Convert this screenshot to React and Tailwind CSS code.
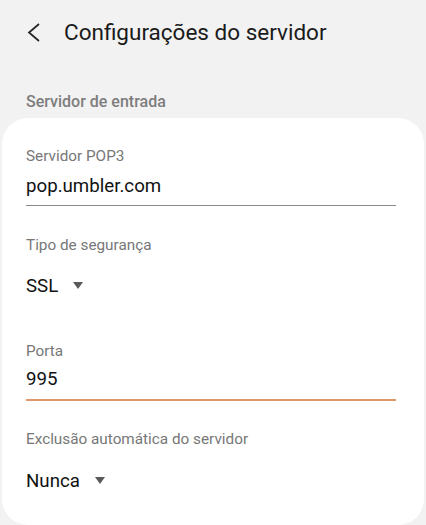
export default function App() {
  const font = { fontFamily: "Roboto, 'Noto Sans', sans-serif" };
  const Tri = () => (
    <svg width="10" height="7" viewBox="0 0 10 7" className="ml-[15px] self-start mt-[8px]">
      <polygon points="0,0 10,0 5,7" fill="#5a5a5a" />
    </svg>
  );
  return (
    <div className="w-[426px] h-[525px] overflow-hidden bg-[#f2f2f2] flex flex-col" style={font}>
      <div className="h-[64px] flex items-center pl-[27px] shrink-0">
        <svg width="14" height="19" viewBox="0 0 14 19" className="shrink-0">
          <polyline points="12,1 2,9.5 12,18" fill="none" stroke="#222" strokeWidth="1.7" />
        </svg>
        <span className="ml-[23px] text-[22.5px] text-[#1a1a1a] leading-none">Configurações do servidor</span>
      </div>
      <div className="h-[54px] shrink-0 pl-[26px] pt-[28px]">
        <div className="text-[16px] font-medium text-[#7d7d7d] leading-[20px]">Servidor de entrada</div>
      </div>
      <div className="mx-[2px] bg-white rounded-[26px] flex-1 px-[24px] pt-[29px]">
        <div className="text-[15.3px] text-[#777] leading-[18px]">Servidor POP3</div>
        <div className="text-[18.7px] text-[#111] leading-[24px] mt-[9px]">pop.umbler.com</div>
        <div className="h-px bg-[#8a8a8a] mt-[7px] mr-[4px]"></div>
        <div className="text-[15.3px] text-[#777] leading-[18px] mt-[30px]">Tipo de segurança</div>
        <div className="flex mt-[20px] h-[24px]">
          <span className="text-[18.7px] text-[#111] leading-[24px]">SSL</span>
          <Tri />
        </div>
        <div className="text-[15.3px] text-[#777] leading-[18px] mt-[44px]">Porta</div>
        <div className="text-[18.7px] text-[#111] leading-[24px] mt-[7px]">995</div>
        <div className="h-[2px] bg-[#e0966c] mt-[8px] mr-[4px]"></div>
        <div className="text-[15.3px] text-[#777] leading-[18px] mt-[29px]">Exclusão automática do servidor</div>
        <div className="flex mt-[21px] h-[24px]">
          <span className="text-[18.7px] text-[#111] leading-[24px]">Nunca</span>
          <Tri />
        </div>
      </div>
    </div>
  );
}
